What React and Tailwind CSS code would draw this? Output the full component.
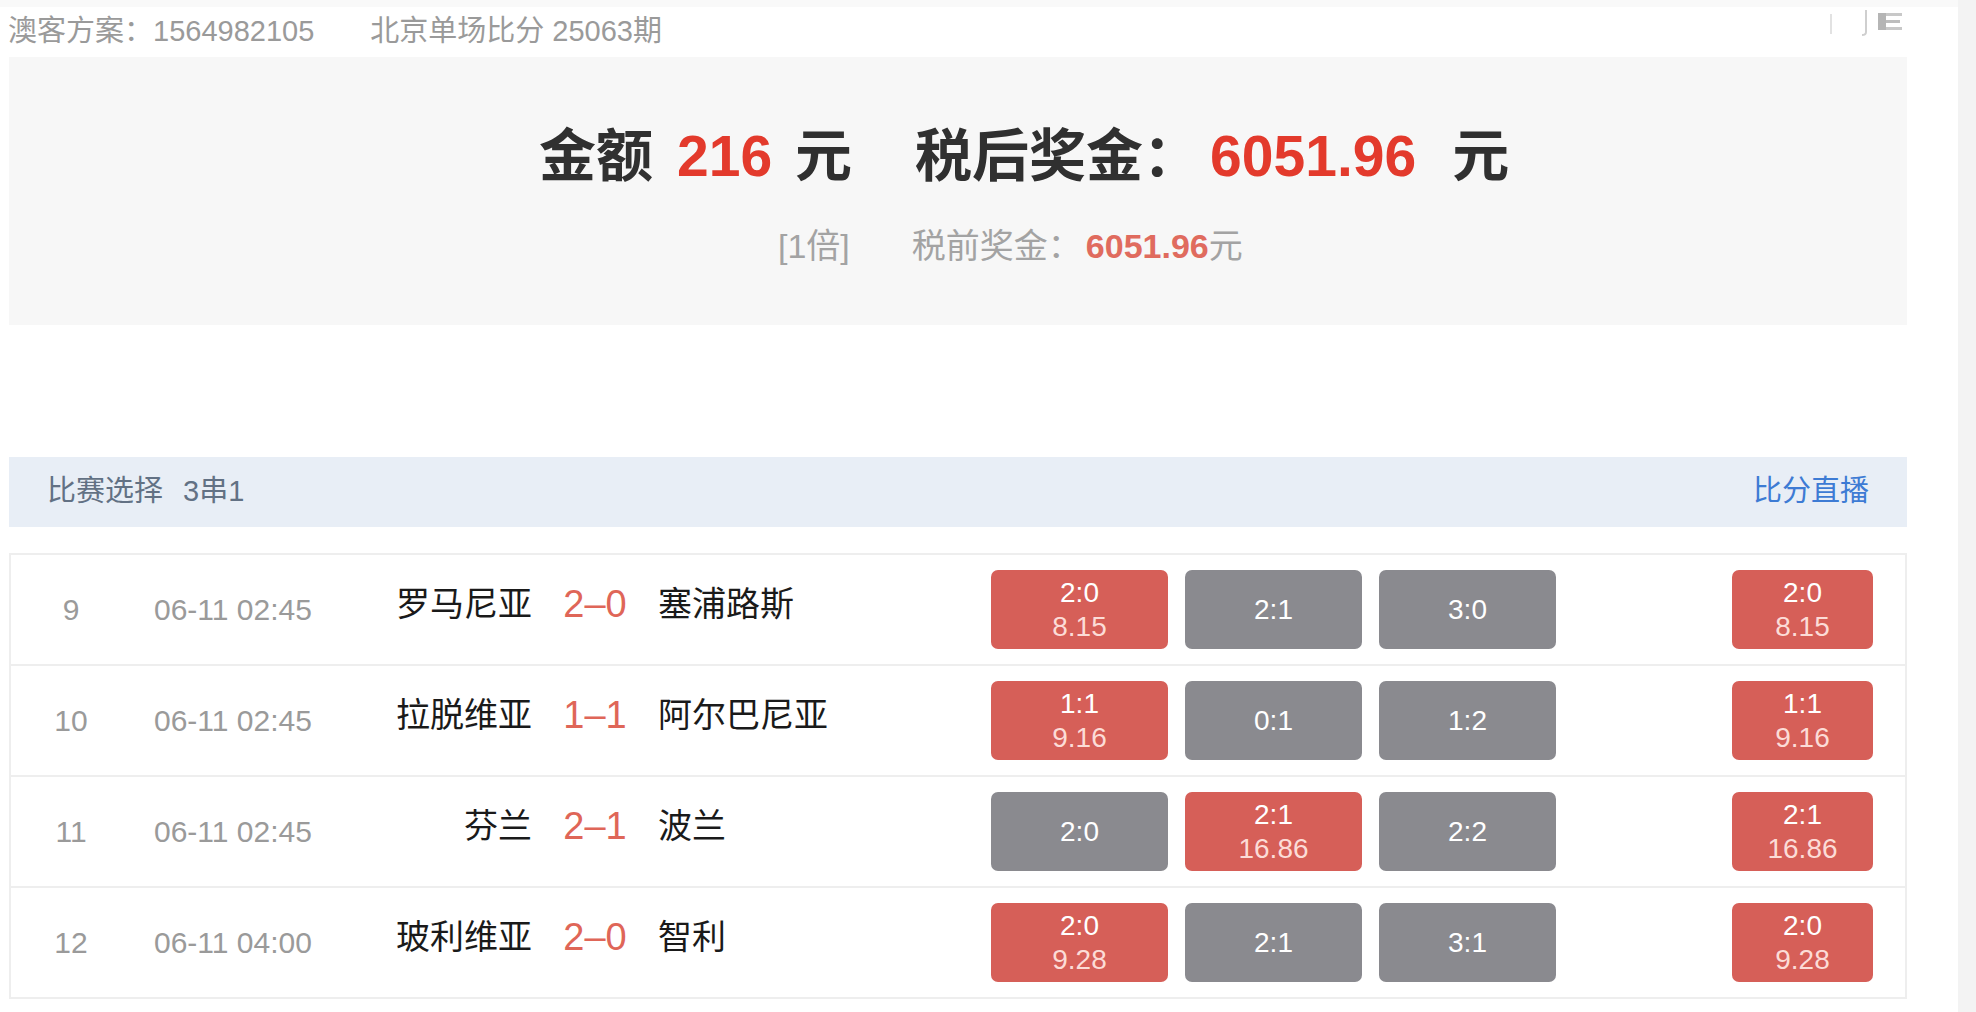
import React from 'react'

// 比赛数据
const matches = [
  {
    no: '9',
    time: '06-11 02:45',
    home: '罗马尼亚',
    score: '2–0',
    away: '塞浦路斯',
    options: [
      { label: '2:0', odds: '8.15', hit: true },
      { label: '2:1' },
      { label: '3:0' },
    ],
    result: { label: '2:0', odds: '8.15' },
  },
  {
    no: '10',
    time: '06-11 02:45',
    home: '拉脱维亚',
    score: '1–1',
    away: '阿尔巴尼亚',
    options: [
      { label: '1:1', odds: '9.16', hit: true },
      { label: '0:1' },
      { label: '1:2' },
    ],
    result: { label: '1:1', odds: '9.16' },
  },
  {
    no: '11',
    time: '06-11 02:45',
    home: '芬兰',
    score: '2–1',
    away: '波兰',
    options: [
      { label: '2:0' },
      { label: '2:1', odds: '16.86', hit: true },
      { label: '2:2' },
    ],
    result: { label: '2:1', odds: '16.86' },
  },
  {
    no: '12',
    time: '06-11 04:00',
    home: '玻利维亚',
    score: '2–0',
    away: '智利',
    options: [
      { label: '2:0', odds: '9.28', hit: true },
      { label: '2:1' },
      { label: '3:1' },
    ],
    result: { label: '2:0', odds: '9.28' },
  },
]

// 选项按钮
function OptionButton({ label, odds, hit, wide }) {
  return (
    <div
      className={`${wide ? 'w-[177px]' : 'w-[141px]'} h-[79px] rounded-[7px] flex flex-col items-center justify-center text-[28px] leading-[34px] ${
        hit ? 'bg-[#d65f58]' : 'bg-[#8a8a8f]'
      }`}
    >
      <span className="text-white">{label}</span>
      {odds && <span className="text-[#fcdcd7]">{odds}</span>}
    </div>
  )
}

// 比赛行
function MatchRow({ match, last }) {
  return (
    <div className={`flex items-center ${last ? 'h-[109px]' : 'h-[111px] border-b-2 border-[#eeeeee]'}`}>
      <div className="w-[120px] text-center text-[30px] text-[#9a9a9a]">{match.no}</div>
      <div className="w-[199px] pl-[23px] text-[30px] text-[#9a9a9a] whitespace-nowrap">{match.time}</div>
      <div className="w-[202px] text-right text-[34px] text-[#1a1a1a] pb-[10px] whitespace-nowrap">{match.home}</div>
      <div className="w-[126px] text-center text-[38px] text-[#df6658] pb-[10px]">{match.score}</div>
      <div className="w-[333px] text-[34px] text-[#1a1a1a] pb-[10px] whitespace-nowrap">{match.away}</div>
      <div className="flex gap-[17px]">
        {match.options.map((o, i) => (
          <OptionButton key={i} {...o} wide />
        ))}
      </div>
      <div className="flex-1" />
      <div className="pr-[32px]">
        <OptionButton label={match.result.label} odds={match.result.odds} hit />
      </div>
    </div>
  )
}

export default function App() {
  return (
    <div className="w-[1976px] h-[1012px] bg-white flex relative overflow-hidden font-['Liberation_Sans','Noto_Sans_CJK_SC',sans-serif]">
      {/* 主体 */}
      <div className="w-[1958px] flex flex-col">
        <div className="h-[7px] bg-[#f9f9f9]" />
        {/* 顶部方案信息 */}
        <div className="h-[50px] pl-[8px] flex items-center text-[29px] text-[#9a9a9a] whitespace-nowrap">
          <span>澳客方案：1564982105</span>
          <span className="ml-[56px]">北京单场比分 25063期</span>
        </div>

        {/* 奖金信息 */}
        <div className="ml-[9px] w-[1898px] h-[268px] bg-[#f7f7f7] flex flex-col">
          <div className="pt-[68px] pl-[530px] h-[132px] flex items-center text-[57px] font-bold text-[#303030] whitespace-nowrap">
            <span>金额</span>
            <span className="ml-[24px] text-[#e33a2c]">216</span>
            <span className="ml-[23px]">元</span>
            <span className="ml-[63px]">税后奖金：</span>
            <span className="ml-[10px] text-[#e33a2c]">6051.96</span>
            <span className="ml-[36px]">元</span>
          </div>
          <div className="pt-[32px] pl-[769px] flex items-center text-[34px] text-[#a3a3a3] whitespace-nowrap">
            <span>[1倍]</span>
            <span className="ml-[62px]">税前奖金：</span>
            <span className="ml-[4px] font-bold text-[#e06b5e]">6051.96</span>
            <span>元</span>
          </div>
        </div>

        {/* 比赛选择栏 */}
        <div className="mt-[132px] ml-[9px] w-[1898px] h-[70px] bg-[#e8eef6] px-[38px] flex items-center justify-between text-[29px]">
          <div className="text-[#627184] whitespace-nowrap">
            比赛选择<span className="ml-[20px]">3串1</span>
          </div>
          <div className="text-[#3d7bd4]">比分直播</div>
        </div>

        {/* 比赛列表 */}
        <div className="mt-[26px] ml-[9px] w-[1898px] border-2 border-[#eeeeee]">
          {matches.map((m, i) => (
            <MatchRow key={m.no} match={m} last={i === matches.length - 1} />
          ))}
        </div>
      </div>

      {/* 右侧滚动条区域 */}
      <div className="w-[18px] bg-[#f3f3f3]" />

      {/* 右上角残影图标 */}
      <svg className="absolute left-[1826px] top-[8px]" width="84" height="30" viewBox="0 0 84 30">
        <rect x="4" y="6" width="2" height="20" fill="#e2e2e2" />
        <path d="M40 2 L40 24 Q40 27 36 27" stroke="#cfcfcf" strokeWidth="2" fill="none" />
        <rect x="52" y="5" width="24" height="3" fill="#c8c8c8" />
        <rect x="52" y="12" width="22" height="3" fill="#bdbdbd" />
        <rect x="52" y="19" width="24" height="3" fill="#c8c8c8" />
        <rect x="52" y="5" width="8" height="17" fill="#b5b5b5" />
      </svg>
    </div>
  )
}
